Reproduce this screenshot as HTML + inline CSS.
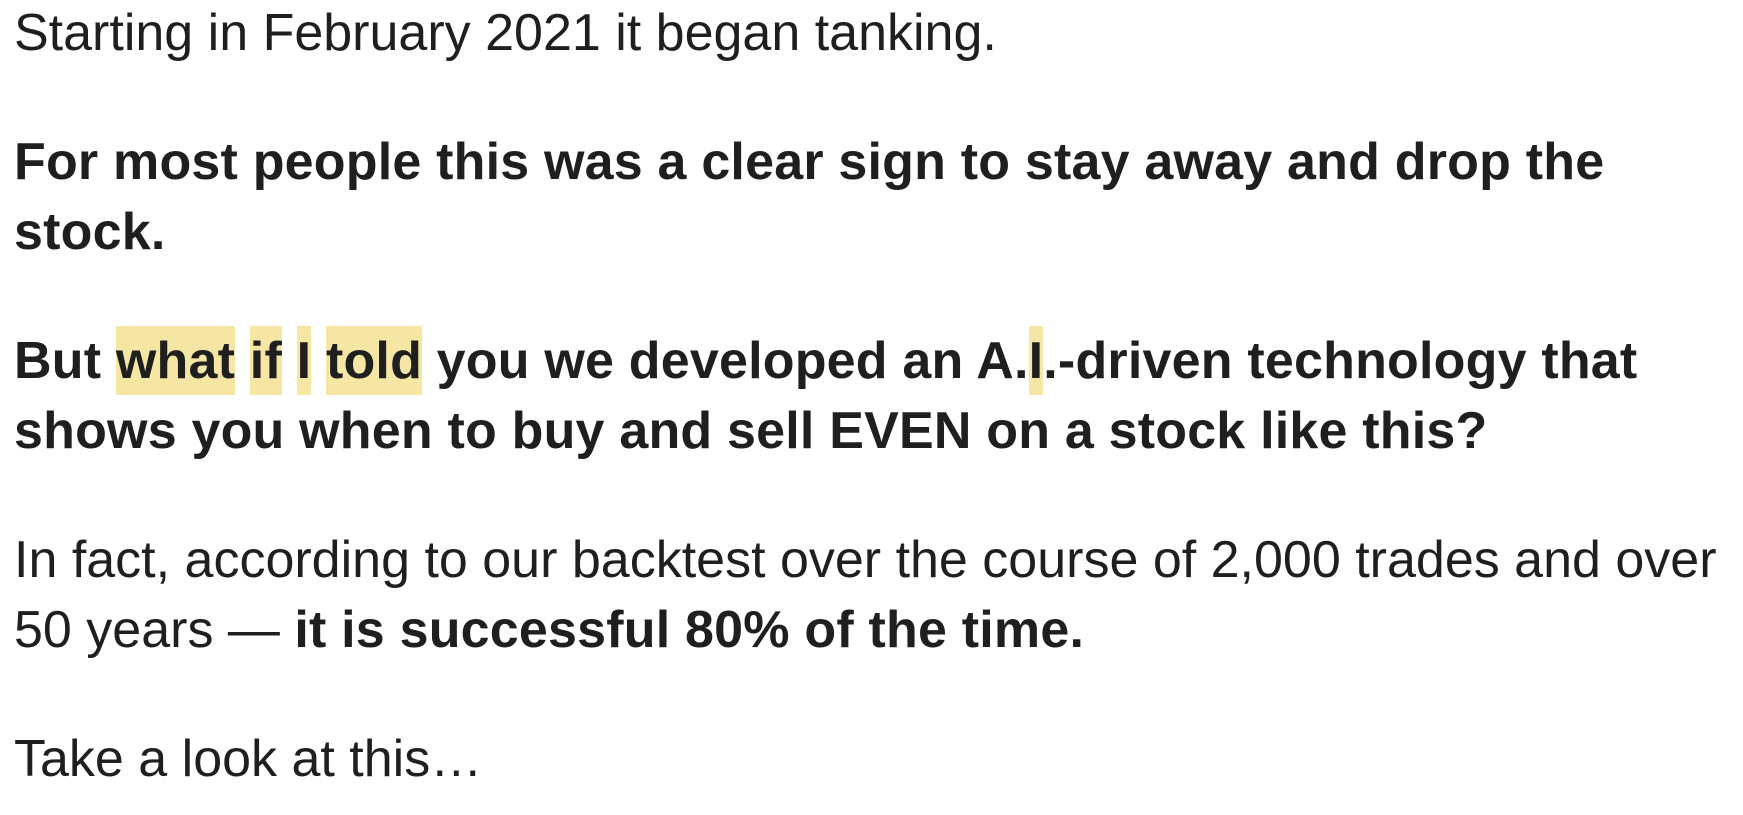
<!DOCTYPE html>
<html><head><meta charset="utf-8"><style>
html,body{margin:0;padding:0;background:#fff;width:1743px;height:815px;overflow:hidden}
body{font-family:"Liberation Sans",Arial,sans-serif;font-size:52px;line-height:70px;color:#1f1f1f;padding-left:14px}
p{margin:0 0 59px 0;white-space:nowrap}
p:first-child{margin-top:-2px}
b{font-weight:bold;letter-spacing:0.2px}
.h{background:#f6e6a4;padding:6px 0 5px}
</style></head><body>
<p>Starting in February 2021 it began tanking.</p>
<p><b>For most people this was a clear sign to stay away and drop the<br>stock.</b></p>
<p><b>But <span class="h">what</span> <span class="h">if</span> <span class="h">I</span> <span class="h">told</span> you we developed an A.<span class="h">I</span>.-driven technology that<br>shows you when to buy and sell EVEN on a stock like this?</b></p>
<p>In fact, according to our backtest over the course of 2,000 trades and over<br>50 years — <b>it is successful 80% of the time.</b></p>
<p>Take a look at this…</p>
</body></html>
